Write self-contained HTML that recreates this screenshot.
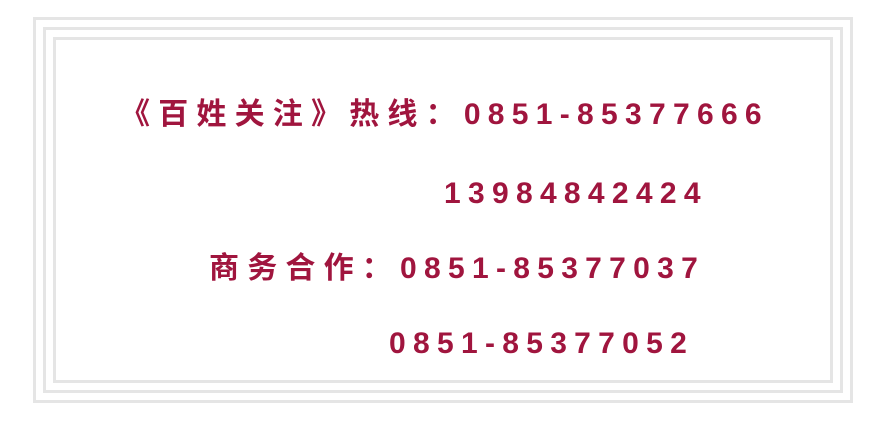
<!DOCTYPE html>
<html><head><meta charset="utf-8"><style>
html,body{margin:0;padding:0;background:#fff;width:882px;height:423px;overflow:hidden;position:relative}
.b{position:absolute;border:3px solid #e5e5e5;box-sizing:border-box}
.t{position:absolute;white-space:nowrap;font-family:"Liberation Sans","Noto Sans CJK SC",sans-serif;font-weight:bold;font-size:30px;letter-spacing:7.3px;color:#a0153e;line-height:30px}
.c{letter-spacing:8.2px}
</style></head><body>
<div class="b" style="left:33px;top:17px;width:820px;height:386px"></div>
<div class="b" style="left:43px;top:27px;width:800px;height:366px"></div>
<div class="b" style="left:53px;top:37px;width:780px;height:346px"></div>
<div class="t" style="left:120px;top:100px"><span class="c">《百姓关注》热线：</span>0851-85377666</div>
<div class="t" style="left:444px;top:179px">13984842424</div>
<div class="t" style="left:209px;top:254px"><span class="c">商务合作：</span>0851-85377037</div>
<div class="t" style="left:389px;top:329px">0851-85377052</div>
</body></html>
